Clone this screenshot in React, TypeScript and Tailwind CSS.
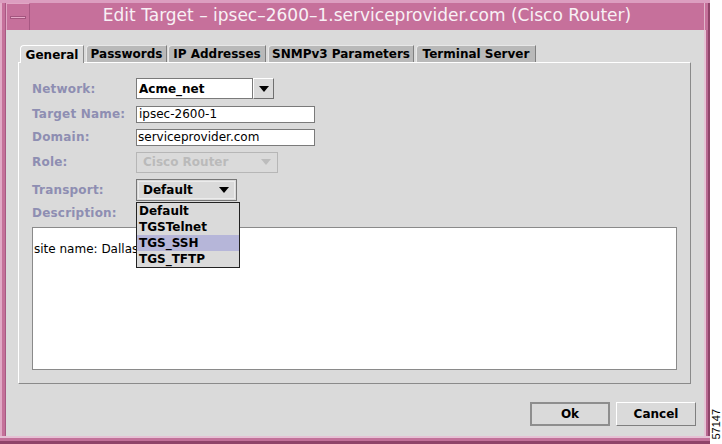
import React from "react";

const font = { fontFamily: '"DejaVu Sans", "Liberation Sans", sans-serif' };

function Arrow({ color = "#000" }: { color?: string }) {
  return (
    <svg width="10" height="6" viewBox="0 0 10 6">
      <polygon points="0,0 10,0 5,6" fill={color} />
    </svg>
  );
}

function Tab({ label, w, selected, ml }: { label: string; w: string; selected?: boolean; ml?: string }) {
  return (
    <div
      className={`${w} ${ml ?? ""} h-[17px] flex items-center justify-center text-[12px] font-bold text-black rounded-tl-[4px] border-t border-l border-r ${
        selected
          ? "bg-[#dadada] border-t-white border-l-white border-r-[#8a8a8a] relative z-10 h-[18px] -mb-px"
          : "bg-[#b9b9b9] border-t-[#e8e8e8] border-l-[#e8e8e8] border-r-[#7f7f7f]"
      }`}
    >
      {label}
    </div>
  );
}

function Label({ children }: { children: React.ReactNode }) {
  return <div className="w-[104px] shrink-0 text-[12px] font-bold text-[#8e8eb2] tracking-[0.2px]">{children}</div>;
}

export default function App() {
  return (
    <div className="w-[722px] h-[444px] bg-white flex overflow-hidden" style={font}>
      {/* window */}
      <div className="w-[710px] h-[444px] flex flex-col">
        {/* title bar */}
        <div className="h-[30px] flex bg-[#c6709b] border-t-[3px] border-t-[#dc9ec0]">
          <div className="w-[6px] shrink-0 border-l-2 border-l-[#e3adc8] border-r border-r-[#a85883]" />
          <div className="w-[24px] h-[27px] shrink-0 flex items-center justify-center border-t border-l border-t-[#e0a6c4] border-l-[#e0a6c4] border-r border-r-[#a85883]">
            <div className="w-[16px] h-[3px] bg-[#e6a8c7] border border-[#a3557e]" />
          </div>
          <div className="flex-1 flex items-center justify-center text-[17px] text-[#f8f0f5] pb-[1px]">
            Edit Target – ipsec–2600–1.serviceprovider.com (Cisco Router)
          </div>
          <div className="w-[6px] shrink-0 border-l border-l-[#e2b6cb] border-r-2 border-r-[#8f4469]" />
        </div>

        {/* body */}
        <div className="flex-1 flex">
          <div className="w-[6px] shrink-0 bg-[#c47199] border-l-2 border-l-[#e0a8c4] border-r border-r-[#a85883]" />
          <div className="flex-1 bg-[#dadada] flex flex-col pt-[15px] pb-[10px]">
            {/* tabs */}
            <div className="flex items-end ml-[14px] h-[17px]">
              <Tab label="General" w="w-[64px]" selected />
              <Tab label="Passwords" w="w-[81px]" ml="ml-[2px]" />
              <Tab label="IP Addresses" w="w-[98px]" ml="ml-[1px]" />
              <Tab label="SNMPv3 Parameters" w="w-[146px]" ml="ml-[2px]" />
              <Tab label="Terminal Server" w="w-[120px]" ml="ml-[2px]" />
            </div>

            {/* panel */}
            <div className="ml-[12px] mr-[13px] h-[322px] border-t border-l border-t-white border-l-white border-r border-b border-r-[#8a8a8a] border-b-[#8a8a8a] flex flex-col pt-[15px] pl-[13px] pr-[13px] pb-[13px]">
              {/* Network */}
              <div className="flex items-center h-[21px]">
                <Label>Network:</Label>
                <div className="flex h-[21px]">
                  <div className="w-[117px] bg-white border border-[#7a7a7a] flex items-center pl-[2px] text-[12px] font-bold text-black">
                    Acme_net
                  </div>
                  <div className="w-[21px] bg-[#dadada] border-t border-l border-t-white border-l-white border-r border-b border-r-[#6f6f6f] border-b-[#6f6f6f] flex items-center justify-center">
                    <Arrow />
                  </div>
                </div>
              </div>

              {/* Target Name */}
              <div className="flex items-center h-[16px] mt-[7px]">
                <Label>Target Name:</Label>
                <div className="w-[179px] h-[17px] bg-white border border-[#7a7a7a] flex items-center pl-[2px] text-[12px] text-black">
                  ipsec-2600-1
                </div>
              </div>

              {/* Domain */}
              <div className="flex items-center h-[16px] mt-[7px]">
                <Label>Domain:</Label>
                <div className="w-[179px] h-[17px] bg-white border border-[#7a7a7a] flex items-center pl-[1px] text-[12px] text-black">
                  serviceprovider.com
                </div>
              </div>

              {/* Role */}
              <div className="flex items-center h-[20px] mt-[7px]">
                <Label>Role:</Label>
                <div className="w-[142px] h-[21px] border border-[#b6b6b6] flex items-center justify-between pl-[6px] pr-[6px] text-[12px] font-bold text-[#bababa]">
                  <span>Cisco Router</span>
                  <Arrow color="#bcbcbc" />
                </div>
              </div>

              {/* Transport */}
              <div className="flex items-center h-[22px] mt-[7px]">
                <Label>Transport:</Label>
                <div className="relative">
                  <div className="w-[101px] h-[22px] border border-[#777] p-px">
                    <div className="h-full border border-[#ececec] flex items-center justify-between pl-[4px] pr-[5px] text-[12px] font-bold text-black">
                      <span>Default</span>
                      <Arrow />
                    </div>
                  </div>
                  {/* dropdown list */}
                  <div className="absolute left-0 top-[23px] w-[104px] z-20 bg-[#dadada] border border-[#222] flex flex-col text-[12px] font-bold text-black">
                    <div className="h-[16px] flex items-center pl-[2px]">Default</div>
                    <div className="h-[16px] flex items-center pl-[2px]">TGSTelnet</div>
                    <div className="h-[16px] flex items-center pl-[2px] bg-[#b6b6d9]">TGS_SSH</div>
                    <div className="h-[16px] flex items-center pl-[2px]">TGS_TFTP</div>
                  </div>
                </div>
              </div>

              {/* Description */}
              <div className="flex items-center h-[16px] mt-[4px]">
                <Label>Description:</Label>
              </div>

              <div className="flex-1 mt-[6px] bg-white border border-[#8a8a8a] pt-[12px] pl-[1px] text-[12px] text-black">
                site name: Dallas
              </div>
            </div>

            {/* buttons */}
            <div className="flex justify-end gap-[6px] mt-[18px] pr-[8px]">
              <div className="w-[80px] h-[24px] border-2 border-[#8e8e8e] bg-[#dadada] flex items-center justify-center text-[12px] font-bold text-black">
                Ok
              </div>
              <div className="w-[80px] h-[24px] border border-t-white border-l-white border-r-[#7f7f7f] border-b-[#7f7f7f] bg-[#dadada] flex items-center justify-center text-[12px] font-bold text-black">
                Cancel
              </div>
            </div>
          </div>
          <div className="w-[6px] shrink-0 bg-[#b86890] border-l-2 border-l-[#e6c3d5] border-r-2 border-r-[#8f4469]" />
        </div>

        {/* bottom border */}
        <div className="h-[8px] bg-[#c27199] border-t-2 border-t-[#e6c0d4] border-b-[3px] border-b-[#8f4469]" />
      </div>

      {/* right strip */}
      <div className="w-[12px] h-[444px] flex flex-col justify-end items-center pb-[4px]">
        <div className="[writing-mode:vertical-rl] rotate-180 text-[11px] leading-none text-black" style={{ fontFamily: '"Liberation Sans", Arial, sans-serif' }}>
          57147
        </div>
      </div>
    </div>
  );
}
